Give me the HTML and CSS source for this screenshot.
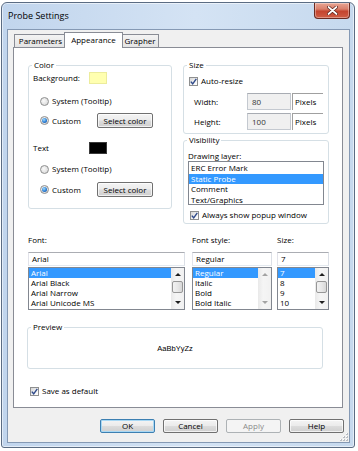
FILE: index.html
```html
<!DOCTYPE html>
<html>
<head>
<meta charset="utf-8">
<title>Probe Settings</title>
<link rel="stylesheet" href="styles.css">
</head>
<body>
<div class="window">
  <div class="titlebar">
    <span class="title">Probe Settings</span>
    <div class="close">
      <svg width="11" height="9" viewBox="0 0 11 9"><path d="M1.5 1 L9.5 8 M9.5 1 L1.5 8" stroke="#5a1f17" stroke-width="3.2" stroke-linecap="round"/><path d="M1.5 1 L9.5 8 M9.5 1 L1.5 8" stroke="#fff" stroke-width="1.7" stroke-linecap="round"/></svg>
    </div>
  </div>
  <div class="client">
    <div class="tabs">
      <div class="tab t-param">Parameters</div>
      <div class="tab active">Appearance</div>
      <div class="tab t-graph">Grapher</div>
    </div>
    <div class="panel">
      <div class="top">
        <fieldset class="group color-group">
          <legend>Color</legend>
          <div class="row lbl-row r1"><span class="sw-lbl">Background:</span><span class="swatch yellow"></span></div>
          <div class="row radio-row r2"><span class="radio"></span><span>System (Tooltip)</span></div>
          <div class="row radio-row r3"><span class="radio on"></span><span class="rlbl">Custom</span><span class="btn sel-btn">Select color</span></div>
          <div class="row lbl-row r4"><span class="sw-lbl">Text</span><span class="swatch black"></span></div>
          <div class="row radio-row r5"><span class="radio"></span><span>System (Tooltip)</span></div>
          <div class="row radio-row r6"><span class="radio on"></span><span class="rlbl">Custom</span><span class="btn sel-btn">Select color</span></div>
        </fieldset>
        <div class="rightcol">
          <fieldset class="group size-group">
            <legend>Size</legend>
            <div class="row check-row auto"><span class="check"><svg width="7" height="7" viewBox="0 0 7 7"><path d="M0.8 3.6 L2.7 5.8 L6.3 0.8" fill="none" stroke="#2f4a8a" stroke-width="1.4"/></svg></span><span>Auto-resize</span></div>
            <div class="row dim-row d1"><span class="dlbl">Width:</span><span class="dinput">80</span><span class="unit">Pixels</span></div>
            <div class="row dim-row d2"><span class="dlbl">Height:</span><span class="dinput">100</span><span class="unit">Pixels</span></div>
          </fieldset>
          <fieldset class="group vis-group">
            <legend>Visibility</legend>
            <div class="dl">Drawing layer:</div>
            <div class="listbox layers">
              <div class="items">
                <div class="item">ERC Error Mark</div>
                <div class="item sel">Static Probe</div>
                <div class="item">Comment</div>
                <div class="item">Text/Graphics</div>
              </div>
            </div>
            <div class="row check-row always"><span class="check"><svg width="7" height="7" viewBox="0 0 7 7"><path d="M0.8 3.6 L2.7 5.8 L6.3 0.8" fill="none" stroke="#2f4a8a" stroke-width="1.4"/></svg></span><span>Always show popup window</span></div>
          </fieldset>
        </div>
      </div>

      <div class="fonts">
        <div class="fcol fc-font">
          <div class="flbl">Font:</div>
          <div class="tinput">Arial</div>
          <div class="listbox flist">
            <div class="items">
              <div class="item sel">Arial</div>
              <div class="item">Arial Black</div>
              <div class="item">Arial Narrow</div>
              <div class="item">Arial Unicode MS</div>
            </div>
            <div class="sbar">
              <div class="sb-btn"><span class="arr up"></span></div>
              <div class="thumb"></div>
              <div class="sb-track"></div>
              <div class="sb-btn"><span class="arr down"></span></div>
            </div>
          </div>
        </div>
        <div class="fcol fc-style">
          <div class="flbl">Font style:</div>
          <div class="tinput">Regular</div>
          <div class="listbox flist">
            <div class="items">
              <div class="item sel">Regular</div>
              <div class="item">Italic</div>
              <div class="item">Bold</div>
              <div class="item">Bold Italic</div>
            </div>
            <div class="sbar disabled">
              <div class="sb-btn"><span class="arr up"></span></div>
              <div class="sb-track"></div>
              <div class="sb-btn"><span class="arr down"></span></div>
            </div>
          </div>
        </div>
        <div class="fcol fc-size">
          <div class="flbl">Size:</div>
          <div class="tinput">7</div>
          <div class="listbox flist">
            <div class="items">
              <div class="item sel">7</div>
              <div class="item">8</div>
              <div class="item">9</div>
              <div class="item">10</div>
            </div>
            <div class="sbar">
              <div class="sb-btn"><span class="arr up"></span></div>
              <div class="thumb"></div>
              <div class="sb-track"></div>
              <div class="sb-btn"><span class="arr down"></span></div>
            </div>
          </div>
        </div>
      </div>

      <fieldset class="group preview">
        <legend>Preview</legend>
        <div class="sample">AaBbYyZz</div>
      </fieldset>

      <div class="row check-row save"><span class="check"><svg width="7" height="7" viewBox="0 0 7 7"><path d="M0.8 3.6 L2.7 5.8 L6.3 0.8" fill="none" stroke="#2f4a8a" stroke-width="1.4"/></svg></span><span>Save as default</span></div>
    </div>

    <div class="buttons">
      <span class="btn dlg default">OK</span>
      <span class="btn dlg">Cancel</span>
      <span class="btn dlg disabled">Apply</span>
      <span class="btn dlg">Help</span>
    </div>
    <div class="grip">
      <svg width="9" height="9" viewBox="0 0 9 9">
        <g fill="#b8bcc2"><rect x="7" y="1" width="2" height="2"/><rect x="4" y="4" width="2" height="2"/><rect x="7" y="4" width="2" height="2"/><rect x="1" y="7" width="2" height="2"/><rect x="4" y="7" width="2" height="2"/><rect x="7" y="7" width="2" height="2"/></g>
        <g fill="#fff"><rect x="7" y="1" width="1" height="1"/><rect x="4" y="4" width="1" height="1"/><rect x="7" y="4" width="1" height="1"/><rect x="1" y="7" width="1" height="1"/><rect x="4" y="7" width="1" height="1"/><rect x="7" y="7" width="1" height="1"/></g>
      </svg>
    </div>
  </div>
</div>
</body>
</html>
```

FILE: styles.css
```css
* { box-sizing: border-box; }
html, body { margin: 0; padding: 0; }
body {
  width: 358px; height: 451px; overflow: hidden;
  background: #ffffff;
  font-family: "Open Sans", "Noto Sans", sans-serif;
  font-size: 8px; line-height: 10px; color: #000;
}

/* window frame */
.window {
  margin: 2px 0 0 1px;
  width: 354px; height: 446px;
  border: 1px solid #5b6c83;
  border-radius: 6px 6px 3px 3px;
  background: linear-gradient(90deg, #c1d5ed 0%, #d4e3f4 55%, #c6d9ee 100%);
  padding: 0 4px 4px 5px;
  display: flex; flex-direction: column;
  box-shadow: inset 0 0 0 1px rgba(255,255,255,0.55);
}
.titlebar {
  flex: none; height: 26px;
  display: flex; justify-content: space-between; align-items: flex-start;
}
.title { font-size: 9px; line-height: 12px; margin: 7px 0 0 1px; }
.close {
  width: 36px; height: 16px;
  border: 1px solid #6a2a21; border-top: none;
  border-radius: 0 0 4px 4px;
  background: linear-gradient(#e8a593 0%, #d9806c 40%, #c4442e 55%, #cf5d45 100%);
  display: flex; align-items: center; justify-content: center;
  box-shadow: inset 0 0 0 1px rgba(255,255,255,0.35);
}

.client {
  flex: 1;
  border: 1px solid #8599b4;
  background: #f0f0f0;
  padding: 2px 0 0 5px;
  position: relative;
}

/* tabs */
.tabs { display: flex; align-items: flex-end; height: 15px; margin-left: 1px; }
.tab {
  height: 13px; padding: 0;
  border: 1px solid #898c95; border-bottom: none;
  background: linear-gradient(#f3f3f3, #e4e4e4);
  line-height: 12px; text-align: center; white-space: nowrap;
  margin-right: -1px;
}
.t-param { width: 53px; }
.t-graph { width: 38px; }
.tab.active {
  position: relative; z-index: 2;
  height: 16px; margin: 0 -2px -1px -2px;
  width: 59px;
  background: #fff; line-height: 14px;
}

.panel {
  width: 330px; height: 361px;
  border: 1px solid #898c95;
  background: #fff;
}

/* group boxes */
.group {
  margin: 0; padding: 0; min-width: 0;
  border: 1px solid #d5dfe5; border-radius: 3px;
}
.group legend {
  padding: 0 2px; margin-left: 3px;
  line-height: 10px; font-size: 8px;
}
.row { display: flex; align-items: center; height: 12px; }

.top { display: flex; align-items: flex-start; }
.color-group { margin: 12px 0 0 14px; width: 144px; height: 149px; }
.rightcol { margin: 12px 0 0 11px; width: 146px; }

.lbl-row { padding-left: 4px; }
.sw-lbl { width: 56px; }
.swatch { width: 18px; height: 12px; }
.swatch.yellow { background: #ffffb0; border: 1px solid #ecec9c; }
.swatch.black { background: #000; border: 1px solid #3a3a3a; }
.r1 { margin-top: 2px; }
.r2 { margin-top: 11px; }
.r3 { margin-top: 6px; height: 15px; }
.r4 { margin-top: 14px; }
.r5 { margin-top: 9px; }
.r6 { margin-top: 7px; height: 15px; }

.radio-row { padding-left: 11px; }
.radio {
  width: 9px; height: 9px; border-radius: 50%;
  border: 1px solid #8e8f8f;
  background: radial-gradient(circle at 40% 40%, #fafafa 0%, #dadada 80%);
  margin-right: 3px; flex: none;
  display: flex; align-items: center; justify-content: center;
}
.radio.on::after {
  content: ""; width: 5px; height: 5px; border-radius: 50%;
  background: radial-gradient(circle at 40% 35%, #a4dcfb 0%, #2b7fd6 55%, #103f8c 100%);
}
.rlbl { width: 45px; }

.btn {
  display: flex; align-items: center; justify-content: center;
  border: 1px solid #707070; border-radius: 2px;
  background: linear-gradient(#f4f4f4 0%, #ebebeb 48%, #dcdcdc 52%, #cfcfcf 100%);
  box-shadow: inset 0 0 0 1px rgba(255,255,255,0.7);
  color: #000;
}
.sel-btn { width: 56px; height: 15px; }

/* size group */
.size-group { height: 74px; }
.check-row .check { margin-right: 3px; }
.check {
  width: 9px; height: 9px; flex: none;
  border: 1px solid #8e8f8f;
  background: linear-gradient(135deg, #d6d6d6 0%, #f7f7f7 70%, #fff 100%);
  display: flex; align-items: center; justify-content: center;
}
.auto { margin-top: 5px; padding-left: 5px; }
.dim-row { height: 17px; padding-left: 10px; }
.d1 { margin-top: 6px; }
.d2 { margin-top: 3px; }
.dlbl { width: 53px; }
.dinput {
  width: 44px; height: 17px;
  border: 1px solid #c4c9d0; border-top-color: #a8acb3;
  background: #f0f0f0; color: #333;
  padding-left: 4px; line-height: 15px;
}
.unit {
  width: 31px; height: 17px; margin-left: 1px;
  border-top: 1px solid #a0a0a0; border-left: 1px solid #a0a0a0;
  padding-left: 2px; line-height: 15px;
}

/* visibility group */
.vis-group { margin-top: 1px; height: 89px; }
.dl { margin-top: 6px; padding-left: 4px; height: 10px; }
.listbox {
  border: 1px solid #828790;
  background: #fff;
  display: flex;
}
.items { flex: 1; min-width: 0; }
.item { height: 10px; line-height: 10px; padding-left: 2px; white-space: nowrap; overflow: hidden; }
.item.sel { background: #3399ff; color: #fff; }
.layers { margin-left: 4px; width: 136px; height: 44px; padding-top: 1px; }
.layers .item { height: 10.5px; line-height: 10.5px; }
.always { margin-top: 4px; padding-left: 6px; }

/* fonts */
.fonts { display: flex; margin: 11px 0 0 14px; }
.fcol { display: flex; flex-direction: column; }
.fc-font { width: 157px; }
.fc-style { width: 80px; margin-left: 7px; }
.fc-size { width: 52px; margin-left: 5px; }
.flbl { height: 10px; margin-bottom: 7px; }
.tinput {
  height: 14px;
  border: 1px solid #abadb3; border-color: #abadb3 #dbdfe6 #e3e9ef #e2e3ea;
  padding-left: 3px; line-height: 12px;
}
.flist { margin-top: 1px; height: 43px; }
.sbar {
  width: 13px; flex: none;
  background: linear-gradient(90deg, #e9e9e9 0%, #f5f5f5 40%, #f1f1f1 100%);
  display: flex; flex-direction: column;
}
.sb-btn { height: 13px; display: flex; align-items: center; justify-content: center; flex: none; }
.sb-track { flex: 1; }
.thumb {
  height: 12px; margin: 0 1px; flex: none;
  border: 1px solid #979797; border-radius: 2px;
  background: linear-gradient(90deg, #f2f2f2 0%, #e8e8e8 50%, #d8d8d8 100%);
}
.arr { width: 0; height: 0; border-left: 3px solid transparent; border-right: 3px solid transparent; }
.arr.up { border-bottom: 3px solid #1f1f1f; }
.arr.down { border-top: 3px solid #1f1f1f; }
.sbar.disabled .arr.up { border-bottom-color: #a3a3a3; }
.sbar.disabled .arr.down { border-top-color: #a3a3a3; }

/* preview */
.preview { margin: 12px 0 0 13px; width: 296px; height: 47px; }
.sample {
  margin-top: 12px; text-align: center;
  font-family: "Liberation Sans", Arial, sans-serif; font-size: 7.5px; line-height: 10px;
}

.save { margin-top: 16px; padding-left: 16px; }

/* dialog buttons */
.buttons {
  display: flex; justify-content: flex-end; gap: 8px;
  margin-top: 11px; padding-right: 5px;
}
.dlg { width: 55px; height: 14px; }
.dlg.default { border-color: #3c7fb1; box-shadow: inset 0 0 0 1px #a8d8f4; }
.dlg.disabled {
  border-color: #adb2b5; background: #f4f4f4; color: #8a8a8a; box-shadow: none;
}

.grip { position: absolute; right: 1px; bottom: 1px; width: 9px; height: 9px; line-height: 0; }
```
